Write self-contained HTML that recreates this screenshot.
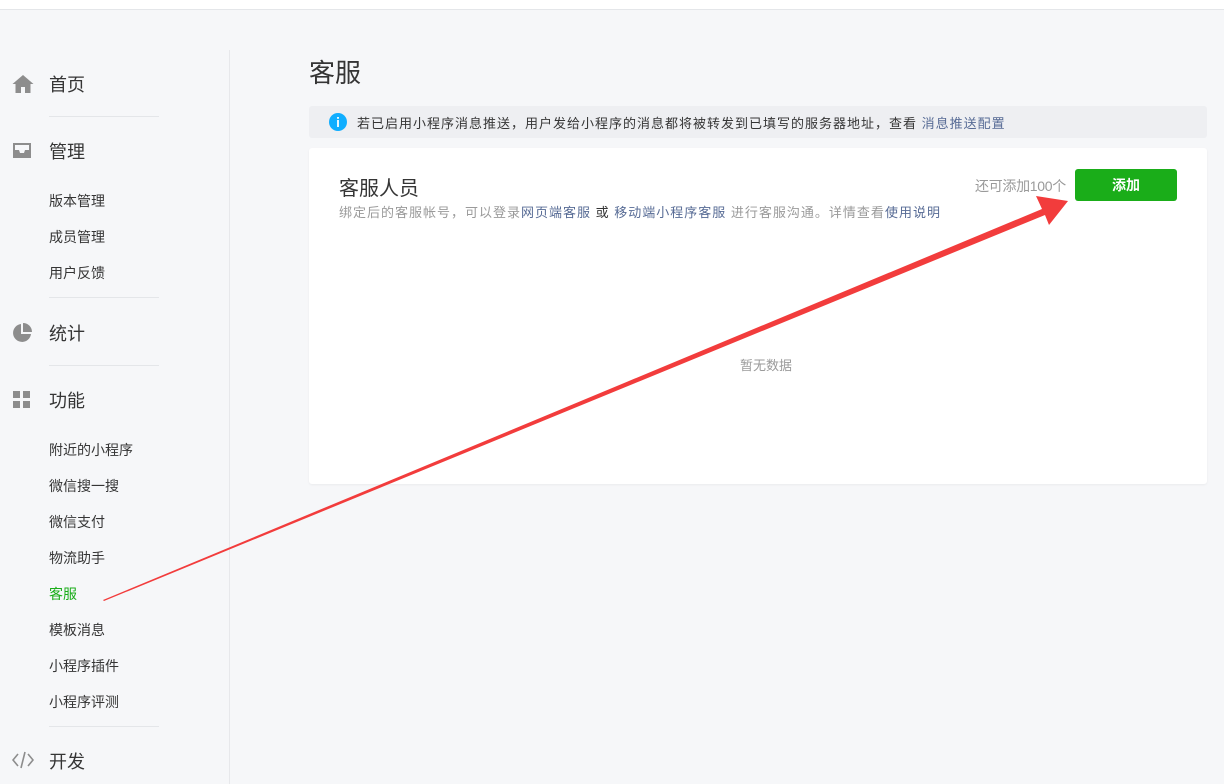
<!DOCTYPE html>
<html><head><meta charset="utf-8"><style>
*{margin:0;padding:0;box-sizing:border-box}
body{width:1224px;height:784px;overflow:hidden;background:#f6f7f9;font-family:"Liberation Sans","Noto Sans CJK SC",sans-serif;position:relative;color:#353535}
.top{position:absolute;left:0;top:0;width:1224px;height:10px;background:#fff;border-bottom:1px solid #e4e6e9}
.vline{position:absolute;left:229px;top:50px;width:1px;height:734px;background:#e7e8eb}
.h{position:absolute;left:49px;font-size:18px;color:#353535}
.s{position:absolute;left:49px;font-size:14px;color:#353535}
.sep{position:absolute;left:49px;width:110px;height:1px;background:#e4e6e9}
.ic{position:absolute;left:12px}
.a{color:#576b95}
</style></head><body>
<div class="top"></div>
<div class="vline"></div>

<svg class="ic" style="top:73px" width="22" height="22" viewBox="0 0 22 22"><path d="M11 2 L0.5 11 H3.5 V20 H9 V14 H13 V20 H18.5 V11 H21.5 Z" fill="#8d8d8d"/></svg>
<div class="h" style="top:71px">首页</div>
<div class="sep" style="top:116px"></div>

<svg class="ic" style="top:141px" width="20" height="18" viewBox="0 0 20 18"><path d="M1 2 H19 V17 H1 Z M3 4 V9 H7 L8 12 H12 L13 9 H17 V4 Z" fill="#8d8d8d" fill-rule="evenodd"/></svg>
<div class="h" style="top:138px">管理</div>
<div class="s" style="top:191px">版本管理</div>
<div class="s" style="top:227px">成员管理</div>
<div class="s" style="top:263px">用户反馈</div>
<div class="sep" style="top:297px"></div>

<svg class="ic" style="top:323px" width="20" height="20" viewBox="0 0 20 20"><path d="M9 1 A9 9 0 1 0 19 11 H9 Z" fill="#8d8d8d"/><path d="M11 0 A9 9 0 0 1 20 9 H11 Z" fill="#8d8d8d"/></svg>
<div class="h" style="top:320px">统计</div>
<div class="sep" style="top:365px"></div>

<svg class="ic" style="top:391px" width="20" height="18" viewBox="0 0 20 18"><rect x="1" y="0" width="7" height="7" fill="#8d8d8d"/><rect x="11" y="0" width="7" height="7" fill="#8d8d8d"/><rect x="1" y="10" width="7" height="7" fill="#8d8d8d"/><rect x="11" y="10" width="7" height="7" fill="#8d8d8d"/></svg>
<div class="h" style="top:387px">功能</div>
<div class="s" style="top:440px">附近的小程序</div>
<div class="s" style="top:476px">微信搜一搜</div>
<div class="s" style="top:512px">微信支付</div>
<div class="s" style="top:548px">物流助手</div>
<div class="s" style="top:584px;color:#1aad19">客服</div>
<div class="s" style="top:620px">模板消息</div>
<div class="s" style="top:656px">小程序插件</div>
<div class="s" style="top:692px">小程序评测</div>
<div class="sep" style="top:726px"></div>

<svg class="ic" style="top:750px" width="22" height="20" viewBox="0 0 22 20"><path d="M6 4 L1 10 L6 16 M16 4 L21 10 L16 16 M13 2 L9 18" stroke="#8d8d8d" stroke-width="1.6" fill="none"/></svg>
<div class="h" style="top:748px">开发</div>

<div style="position:absolute;left:309px;top:53px;font-size:26px;color:#353535">客服</div>

<div style="position:absolute;left:309px;top:106px;width:898px;height:32px;background:#eeeff2;border-radius:3px"></div>
<svg style="position:absolute;left:329px;top:113px" width="18" height="18" viewBox="0 0 18 18"><circle cx="9" cy="9" r="9" fill="#10aeff"/><rect x="8.1" y="7" width="1.8" height="7" fill="#fff"/><rect x="8.1" y="4" width="1.8" height="1.8" fill="#fff"/></svg>
<div style="position:absolute;left:357px;top:113px;font-size:13px;color:#353535;letter-spacing:1px;white-space:nowrap">若已启用小程序消息推送，用户发给小程序的消息都将被转发到已填写的服务器地址，查看 <span class="a">消息推送配置</span></div>

<div style="position:absolute;left:309px;top:148px;width:898px;height:336px;background:#fff;border-radius:3px;box-shadow:0 1px 2px rgba(0,0,0,.05)"></div>
<div style="position:absolute;left:339px;top:172px;font-size:20px;color:#353535">客服人员</div>
<div style="position:absolute;left:339px;top:202px;font-size:13px;color:#9a9a9a;letter-spacing:1px;white-space:nowrap">绑定后的客服帐号，可以登录<span class="a">网页端客服</span> <span style="color:#353535">或</span> <span class="a">移动端小程序客服</span> 进行客服沟通。详情查看<span class="a">使用说明</span></div>
<div style="position:absolute;left:975px;top:176px;font-size:14px;color:#9a9a9a;letter-spacing:-0.3px">还可添加100个</div>
<div style="position:absolute;left:1075px;top:169px;width:102px;height:32px;background:#1aad19;border-radius:3px;color:#fff;font-size:14px;font-weight:bold;text-align:center;line-height:32px">添加</div>
<div style="position:absolute;left:740px;top:355px;font-size:13px;color:#9a9a9a">暂无数据</div>

<svg style="position:absolute;left:0;top:0" width="1224" height="784"><polygon points="103,600 1042,209 1036,196 1068,201 1049,225 1045,215 104,601" fill="#f23c3c"/></svg>
</body></html>
